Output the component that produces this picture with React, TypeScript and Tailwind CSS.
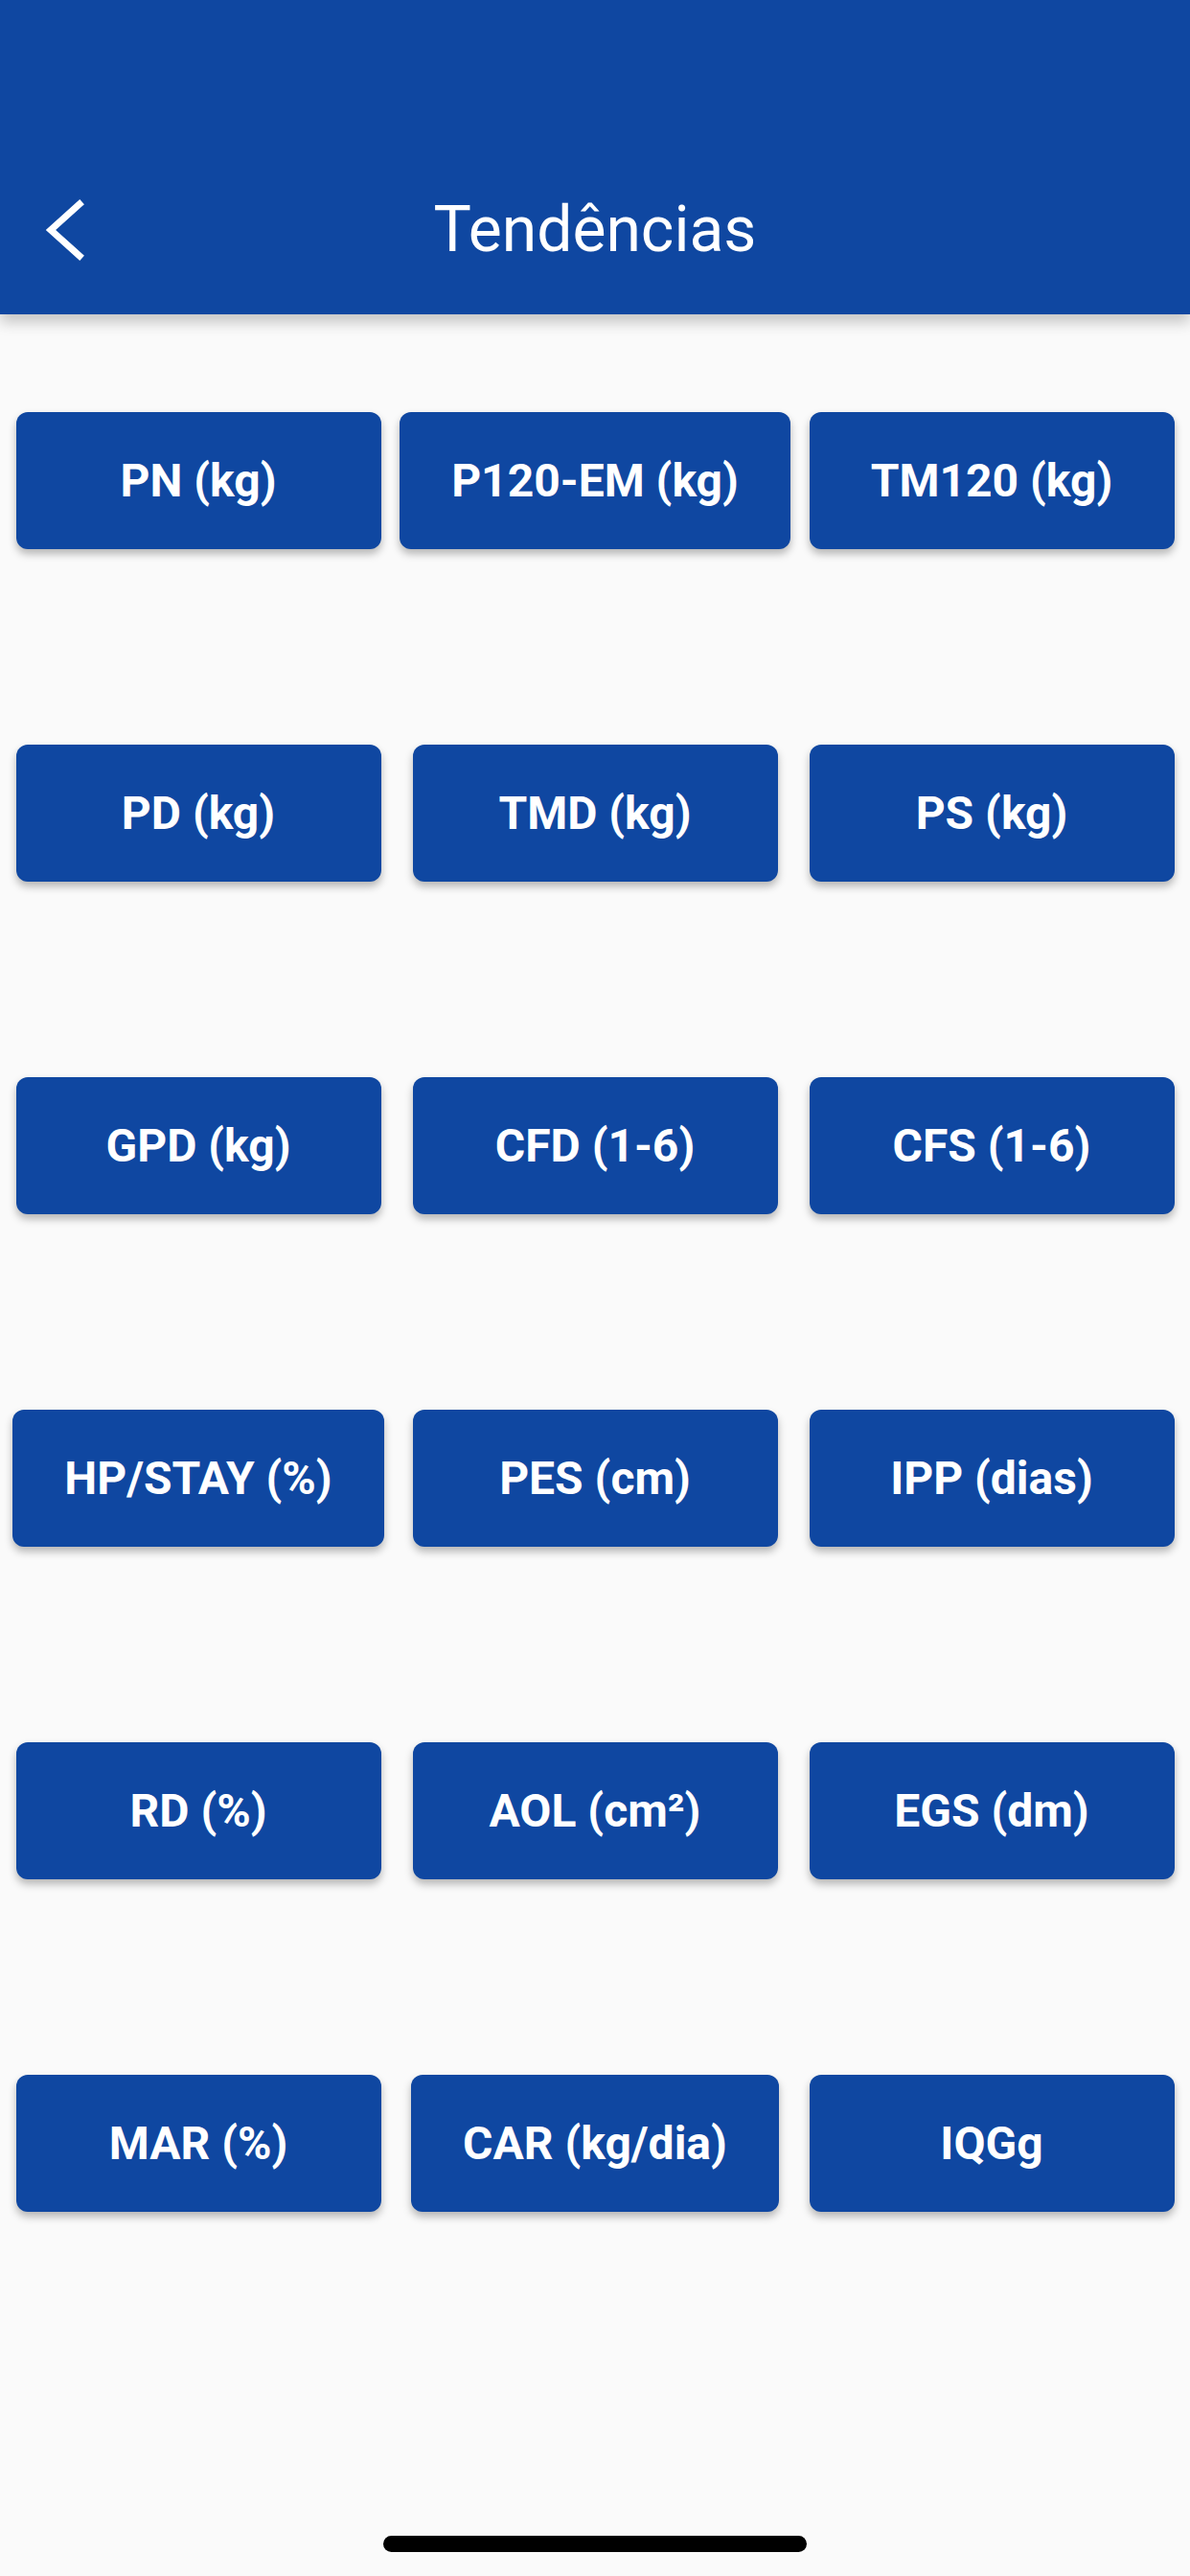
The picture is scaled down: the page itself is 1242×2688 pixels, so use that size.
import React from "react"

const rows: string[][] = [
  ["PN (kg)", "P120-EM (kg)", "TM120 (kg)"],
  ["PD (kg)", "TMD (kg)", "PS (kg)"],
  ["GPD (kg)", "CFD (1-6)", "CFS (1-6)"],
  ["HP/STAY (%)", "PES (cm)", "IPP (dias)"],
  ["RD (%)", "AOL (cm²)", "EGS (dm)"],
  ["MAR (%)", "CAR (kg/dia)", "IQGg"],
]

function TrendButton({ label }: { label: string }) {
  return (
    <div className="flex w-[414px] justify-center">
      <button className="flex h-[143px] min-w-[381px] items-center justify-center whitespace-nowrap rounded-[12px] bg-[#0F47A1] px-[54px] text-[48px] font-bold text-white shadow-[0_5px_9px_rgba(0,0,0,0.28)]">
        {label}
      </button>
    </div>
  )
}

export default function App() {
  return (
    <div className="relative flex h-[2688px] w-[1242px] flex-col overflow-hidden bg-[#FAFAFA] font-['Roboto','Liberation_Sans',sans-serif]">
      <header className="relative z-10 flex h-[328px] w-full items-end bg-[#0F47A1] pb-[58px] shadow-[0_8px_14px_rgba(0,0,0,0.22)]">
        <div className="flex h-[60px] w-full items-center">
          <button className="flex w-[120px] justify-center pl-[16px]">
            <svg width="44" height="64" viewBox="0 0 44 64" fill="none">
              <path d="M37 5 L7 32 L37 59" stroke="white" strokeWidth="7" strokeLinecap="square" strokeLinejoin="miter" />
            </svg>
          </button>
          <h1 className="flex-1 pr-[120px] text-center text-[66px] font-normal leading-none text-white">Tendências</h1>
        </div>
      </header>

      <main className="flex flex-col gap-[204px] pt-[102px]">
        {rows.map((row, i) => (
          <div key={i} className="flex w-full">
            {row.map((label) => (
              <TrendButton key={label} label={label} />
            ))}
          </div>
        ))}
      </main>

      <div className="mt-auto mb-[25px] flex justify-center">
        <div className="h-[17px] w-[442px] rounded-full bg-black" />
      </div>
    </div>
  )
}
